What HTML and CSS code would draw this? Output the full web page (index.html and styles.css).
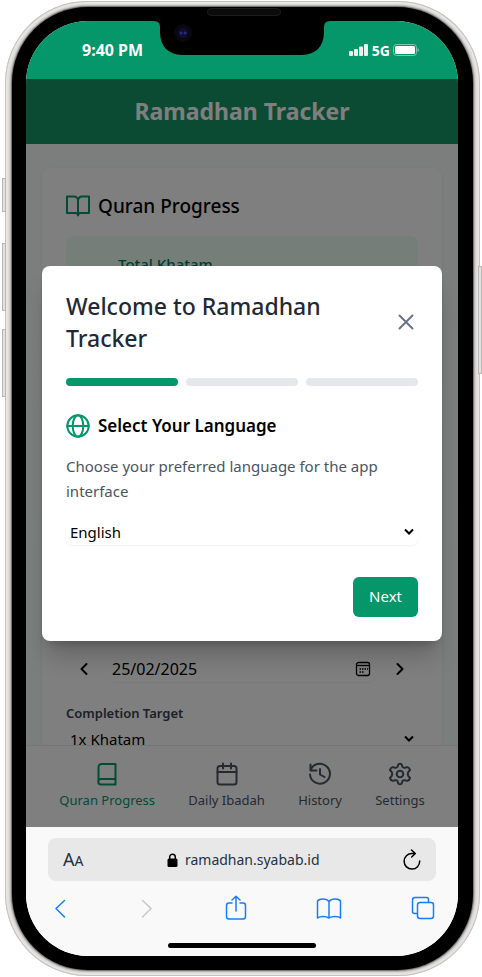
FILE: index.html
```html
<!DOCTYPE html>
<html lang="en">
<head>
<meta charset="utf-8">
<meta name="viewport" content="width=device-width, initial-scale=1">
<title>Ramadhan Tracker</title>
<link rel="stylesheet" href="styles.css">
</head>
<body>
<div class="phone">
  <span class="side side-mute"></span>
  <span class="side side-up"></span>
  <span class="side side-down"></span>
  <span class="side side-power"></span>
  <span class="speaker"></span>
  <div class="bezel">
  <div class="screen">
    <div class="status">
      <span class="time">9:40 PM</span>
      <svg class="notch" width="176" height="34" viewBox="0 0 176 34" aria-hidden="true">
        <path d="M0 0Q6 0 6 6V12Q7 33 28 34H148Q169 33 170 12V6Q170 0 176 0Z" fill="#000"/>
        <circle cx="29" cy="12" r="9" fill="#0a080e"/>
        <circle cx="29" cy="12" r="5" fill="#0e0e35"/>
        <circle cx="27" cy="12" r="1.5" fill="#2a2a80"/>
        <circle cx="31" cy="12" r="1.5" fill="#2a2a80"/>
      </svg>
      <span class="signal">
        <svg width="20" height="14" viewBox="0 0 20 14" fill="#e9f3ee" aria-hidden="true">
          <rect x="0" y="8" width="4" height="5" rx="1"/><rect x="5" y="6" width="4" height="7" rx="1"/><rect x="10" y="3.500" width="4" height="9.500" rx="1"/><rect x="15" y="1" width="4" height="12" rx="1"/>
        </svg>
        <span>5G</span>
        <svg width="26" height="12" viewBox="0 0 26 12" aria-hidden="true">
          <rect x=".5" y=".5" width="23" height="11" rx="3" fill="none" stroke="#7fc5aa"/>
          <rect x="2" y="2" width="20" height="8" rx="1.500" fill="#fff"/>
          <path d="M24.500 4v4q1.500-1 1.500-2t-1.500-2" fill="#7fc5aa"/>
        </svg>
      </span>
    </div>

    <div class="app">
      <header class="app-header"><h1>Ramadhan Tracker</h1></header>
      <main class="content">
        <section class="card">
          <div class="card-title">
            <svg width="24" height="24" viewBox="0 0 24 24" class="line" aria-hidden="true"><path d="M1 2.500h7a4 4 0 0 1 4 4v15a2.500 2.500 0 0 0-2.500-2.500H1zM23 2.500h-7a4 4 0 0 0-4 4v15a2.500 2.500 0 0 1 2.500-2.500H23z"/></svg>
            <h2>Quran Progress</h2>
          </div>
          <div class="summary"><span>Total Khatam</span></div>
          <div class="date-row">
            <button class="step" aria-label="Previous day"><svg width="20" height="20" viewBox="0 0 20 20" class="line" aria-hidden="true"><path d="M12.500 5l-5 5 5 5"/></svg></button>
            <div class="date-box">
              <input type="text" value="25/02/2025" aria-label="Date">
              <svg width="16" height="16" viewBox="0 0 16 16" aria-hidden="true"><rect x="1.500" y="1.500" width="13" height="13" rx="2" fill="none" stroke="currentColor" stroke-width="1.300"/><path d="M2 4.500h12" stroke="currentColor" stroke-width="1.300"/><path d="M7 8h1.500M9.500 8h1.500M12 8h1M4.500 8h1.500M4.500 11h1.500M7 11h1.500" stroke="currentColor" stroke-width="1.700"/></svg>
            </div>
            <button class="step" aria-label="Next day"><svg width="20" height="20" viewBox="0 0 20 20" class="line" aria-hidden="true"><path d="M7.500 5l5 5-5 5"/></svg></button>
          </div>
          <label class="field-label" for="target">Completion Target</label>
          <div class="select-box">
            <select id="target"><option>1x Khatam</option></select>
            <svg class="caret" width="10" height="8" viewBox="0 0 10 8" aria-hidden="true"><path d="M1 1.500l4 4 4-4"/></svg>
          </div>
        </section>
      </main>
      <nav class="tabs">
        <a href="#quran" class="tab active">
          <svg width="24" height="24" viewBox="0 0 24 24" class="line" aria-hidden="true"><path d="M3.500 19.500v-14A3 3 0 0 1 6.500 2H20.500v20.500H6a2.500 2.500 0 0 1 0-5.500h14.500"/></svg>
          <span>Quran Progress</span></a>
        <a href="#ibadah" class="tab">
          <svg width="24" height="24" viewBox="0 0 24 24" class="line" aria-hidden="true"><rect x="2.500" y="4" width="19" height="18.500" rx="2.500"/><path d="M8 1.500v5M16 1.500v5M2.500 10h19"/></svg>
          <span>Daily Ibadah</span></a>
        <a href="#history" class="tab">
          <svg width="24" height="24" viewBox="0 0 24 24" class="line" aria-hidden="true"><path d="M2.500 2.500v6h6M2.500 8.500A10 10 0 1 1 2 12.500M12 7v5.500l4.500 2.500"/></svg>
          <span>History</span></a>
        <a href="#settings" class="tab">
          <svg width="24" height="24" viewBox="0 0 24 24" class="line" aria-hidden="true"><path d="M10.300 2.500Q12 .8 13.700 2.500L14.500 5Q15.300 6 16.800 5.700L19.300 5.100Q21.600 5.700 22 8L20.200 10.200Q19.300 12 20.200 13.800L22 16Q21.600 18.300 19.300 18.900L16.800 18.300Q15.300 18 14.500 19L13.700 21.500Q12 23.200 10.300 21.500L9.500 19Q8.700 18 7.200 18.300L4.700 18.900Q2.400 18.300 2 16L3.800 13.800Q4.700 12 3.800 10.200L2 8Q2.400 5.700 4.700 5.100L7.200 5.700Q8.700 6 9.500 5Z"/><circle cx="12" cy="12" r="3.300"/></svg>
          <span>Settings</span></a>
      </nav>

      <div class="overlay">
        <div class="modal" role="dialog" aria-labelledby="welcome">
          <div class="modal-head">
            <h2 id="welcome">Welcome to Ramadhan Tracker</h2>
            <button class="close" aria-label="Close"><svg width="24" height="24" viewBox="0 0 24 24" class="line" aria-hidden="true"><path d="M5.500 5.500l13 13M18.500 5.500l-13 13"/></svg></button>
          </div>
          <div class="steps"><span class="done"></span><span></span><span></span></div>
          <div class="modal-sub">
            <svg width="24" height="24" viewBox="0 0 24 24" class="line" aria-hidden="true"><circle cx="12" cy="12" r="10.700"/><ellipse cx="12" cy="12" rx="5.300" ry="10.700"/><path d="M1.300 12h21.400"/></svg>
            <h3>Select Your Language</h3>
          </div>
          <label class="hint" for="language">Choose your preferred language for the app interface</label>
          <div class="select-box">
            <select id="language"><option>English</option></select>
            <svg class="caret" width="10" height="8" viewBox="0 0 10 8" aria-hidden="true"><path d="M1 1.500l4 4 4-4"/></svg>
          </div>
          <div class="actions"><button class="next">Next</button></div>
        </div>
      </div>
    </div>

    <div class="browser">
      <div class="address">
        <span class="reader">A<small>A</small></span>
        <span class="url">
          <svg width="11" height="14" viewBox="0 0 11 14" aria-hidden="true"><rect x=".5" y="5.500" width="10" height="8.500" rx="1.500"/><path d="M2.700 6V4a2.800 2.800 0 0 1 5.600 0v2" fill="none" stroke="#000" stroke-width="1.500"/></svg>
          <span>ramadhan.syabab.id</span>
        </span>
        <button class="reload" aria-label="Reload"><svg width="18" height="22" viewBox="0 0 18 22" aria-hidden="true"><path d="M12 4.500H9A7.800 7.800 0 1 0 16.700 12M8.500 1L12.300 4.500 8.700 8"/></svg></button>
      </div>
      <div class="toolbar">
        <button aria-label="Back"><svg width="12" height="24" viewBox="0 0 12 24" aria-hidden="true"><path d="M10.500 4.500L2 12.500l8.500 8.500"/></svg></button>
        <button class="off" aria-label="Forward"><svg width="12" height="24" viewBox="0 0 12 24" aria-hidden="true"><path d="M1.500 4.500L10 12.500 1.500 21"/></svg></button>
        <button aria-label="Share"><svg width="22" height="26" viewBox="0 0 22 26" aria-hidden="true"><path d="M7 8H4Q1.500 8 1.500 10.500V21.500Q1.500 24 4 24H18Q20.500 24 20.500 21.500V10.500Q20.500 8 18 8H15M11 16V1.500M7 5L11 1.200 15 5"/></svg></button>
        <button aria-label="Bookmarks"><svg width="26" height="24" viewBox="0 0 26 24" aria-hidden="true"><path d="M13 22V5.500Q11 3 7 3T1.500 5V22Q3.500 20.500 7 20.500T13 22Q15 20.500 19 20.500T24.500 22V5Q23 3 19 3T13 5.500"/></svg></button>
        <button aria-label="Tabs"><svg width="24" height="24" viewBox="0 0 24 24" aria-hidden="true"><rect x="6.500" y="6.500" width="16" height="16" rx="2.500"/><path d="M6 17.500H3.500Q1.500 17.500 1.500 15.500V4Q1.500 1.500 4 1.500H15.500Q17.500 1.500 17.500 3.500V6"/></svg></button>
      </div>
      <span class="home-bar"></span>
    </div>
  </div>
  </div>
</div>
</body>
</html>
```
FILE: styles.css
```css
* { box-sizing: border-box; }

body {
  margin: 0;
  padding: 1px 2px 1px 5px;
  background: #fff;
  font: 15px/25px "Noto Sans", "Open Sans", sans-serif;
  color: #000;
}

h1, h2, h3 { margin: 0; }

button, input, select {
  margin: 0;
  padding: 0;
  border: 0;
  background: none;
  color: inherit;
  font: inherit;
}

svg { display: block; flex: none; }

.line {
  fill: none;
  stroke: currentColor;
  stroke-width: 2;
  stroke-linecap: round;
  stroke-linejoin: round;
}

/* Device frame */
.phone {
  position: relative;
  height: calc(100vh - 2px);
  min-height: 720px;
  padding: 6px 7px;
  border-radius: 82px;
  background: #dcdad8;
  box-shadow: inset 0 0 0 1px #c4c2c0, inset 0 0 2px 3px #e9e7e5;
}

.bezel {
  height: 100%;
  padding: 14px 15px 14px 14px;
  border-radius: 76px;
  background: #000;
  box-shadow: 0 0 2px 1px #555;
}

.side {
  position: absolute;
  width: 4px;
  border: 1px solid #b9b7b5;
  background: #e3e1df;
}

.side-mute { left: -3px; top: 177px; height: 34px; }
.side-up { left: -3px; top: 242px; height: 68px; }
.side-down { left: -3px; top: 328px; height: 68px; }
.side-power { right: -2px; top: 265px; height: 108px; }

.speaker {
  position: absolute;
  z-index: 1;
  top: 7px;
  left: calc(50% - 36px);
  width: 74px;
  height: 8px;
  border: 1px solid #1c1c1c;
  border-radius: 4px;
  background: #0b0b0b;
}

.screen {
  display: flex;
  flex-direction: column;
  height: 100%;
  overflow: hidden;
  border-radius: 62px;
  background: #f9f9f9;
}

/* Status bar */
.status {
  position: relative;
  display: flex;
  justify-content: space-between;
  align-items: center;
  height: 58px;
  padding: 0 39px 0 56px;
  background: #059669;
  color: #fff;
}

.notch {
  position: absolute;
  top: 0;
  left: calc(50% - 88px);
}

.time { font-size: 16px; font-weight: 700; }

.signal {
  display: flex;
  align-items: center;
  gap: 3px;
  font-size: 14px;
  font-weight: 700;
}

/* App */
.app {
  position: relative;
  display: flex;
  flex: 1;
  flex-direction: column;
  min-height: 0;
  overflow: hidden;
  background: linear-gradient(#f7fcf9, #f5fffb);
}

.app-header {
  padding: 16px;
  background: #189666;
  color: #fff;
  text-align: center;
}

.app-header h1 { font-size: 23px; line-height: 33px; font-weight: 700; }

.content {
  flex: 1;
  min-height: 0;
  padding: 24px 16px 0;
  overflow: hidden;
}

.card {
  padding: 24px;
  border-radius: 8px;
  background: #fff;
  box-shadow: 0 1px 3px rgba(0, 0, 0, .1);
}

.card-title, .modal-sub {
  display: flex;
  align-items: center;
  gap: 8px;
  color: #059669;
}

.card-title h2 { font-size: 19px; line-height: 28px; font-weight: 500; color: #000; }

.summary {
  height: 380px;
  margin: 16px 0 35px;
  padding: 16px 52px;
  border-radius: 8px;
  background: #ecfdf5;
  color: #047857;
  font-weight: 500;
}

.date-row { display: flex; align-items: center; gap: 8px; }

.step { padding: 8px; }

.date-box, .select-box {
  position: relative;
  display: flex;
  align-items: center;
  border-radius: 6px;
  box-shadow: 0 1px 2px rgba(0, 0, 0, .06);
}

.date-box { flex: 1; min-width: 0; padding-right: 3px; }

.date-box input {
  flex: 1;
  min-width: 0;
  height: 25px;
  padding-left: 2px;
  font-size: 16px;
}

.field-label {
  display: block;
  margin: 16px 0 4px;
  font-size: 13px;
  line-height: 20px;
  font-weight: 600;
  color: #374151;
}

.select-box select {
  width: 100%;
  height: 25px;
  padding-left: 4px;
  appearance: none;
}

.caret {
  position: absolute;
  right: 4px;
  top: 8px;
  fill: none;
  stroke: currentColor;
  stroke-width: 2;
  pointer-events: none;
}

.tabs {
  display: flex;
  justify-content: space-evenly;
  height: 82px;
  padding-top: 16px;
  border-top: 1px solid #e5ece9;
  background: #fff;
}

.tab {
  display: flex;
  flex-direction: column;
  align-items: center;
  gap: 4px;
  color: #4b5563;
  font-size: 13px;
  line-height: 20px;
  text-decoration: none;
}

.tab.active { color: #059669; }

/* Onboarding dialog */
.overlay {
  position: absolute;
  inset: 0;
  display: flex;
  align-items: center;
  justify-content: center;
  padding: 16px;
  background: rgba(0, 0, 0, .5);
}

.modal {
  width: 100%;
  max-width: 448px;
  padding: 24px;
  border-radius: 8px;
  background: #fff;
  box-shadow: 0 20px 25px -5px rgba(0, 0, 0, .2), 0 8px 10px -6px rgba(0, 0, 0, .2);
}

.modal-head {
  display: flex;
  align-items: center;
  justify-content: space-between;
  gap: 16px;
}

.modal-head h2 { font-size: 23px; line-height: 32px; font-weight: 500; color: #1f2937; }

.close { color: #6b7280; }

.steps { display: flex; gap: 8px; margin: 24px 0; }

.steps span { flex: 1; height: 8px; border-radius: 4px; background: #e5e7eb; }

.steps .done { background: #059669; }

.modal-sub h3 { font-size: 17px; line-height: 32px; font-weight: 600; color: #000; }

.hint { display: block; margin: 12px 0 16px; color: #4b5563; }

.actions { display: flex; justify-content: flex-end; margin-top: 32px; }

.next {
  height: 40px;
  padding: 0 16px;
  border-radius: 6px;
  background: #059669;
  color: #fff;
}

/* Browser controls */
.browser {
  display: flex;
  flex-direction: column;
  align-items: center;
  padding: 11px 22px 8px;
  background: #f9f9f9;
}

.address {
  display: flex;
  align-items: center;
  justify-content: space-between;
  width: 100%;
  height: 43px;
  padding: 0 15px;
  border-radius: 8px;
  background: #e8e8e8;
  color: #234;
}

.reader { font-size: 18px; }
.reader small { font-size: 14px; }

.url { display: flex; align-items: center; gap: 7px; font-size: 14px; }

.reload svg, .toolbar svg {
  fill: none;
  stroke: currentColor;
  stroke-width: 1.5px;
  stroke-linecap: round;
  stroke-linejoin: round;
}

.reload { color: #000; }

.toolbar {
  display: flex;
  align-items: center;
  justify-content: space-between;
  width: 100%;
  height: 54px;
  padding: 0 1px 0 3px;
  color: #147efb;
}

.toolbar button {
  display: flex;
  justify-content: center;
  min-width: 18px;
}

.toolbar .off { color: #c7c7c7; }

.home-bar {
  width: 148px;
  height: 5px;
  margin-top: 8px;
  border-radius: 3px;
  background: #000;
}
```
